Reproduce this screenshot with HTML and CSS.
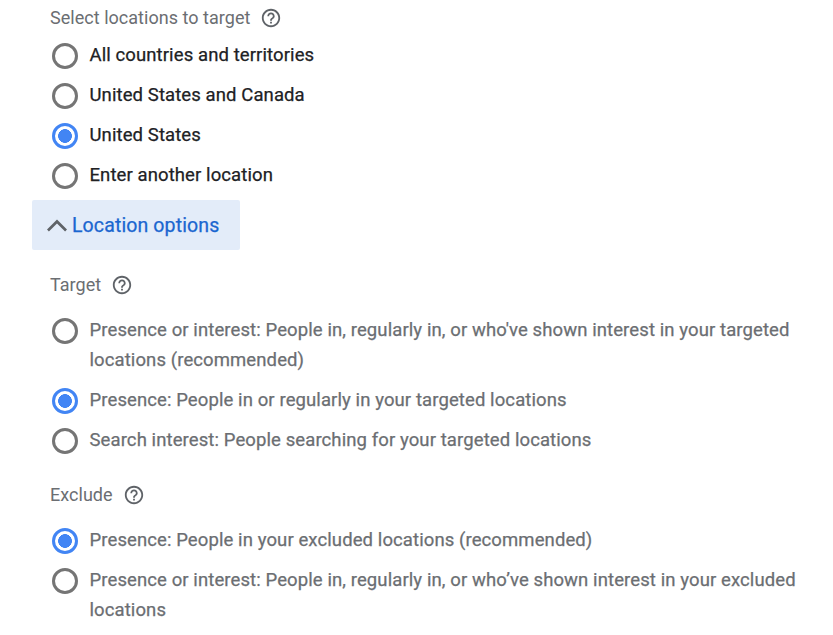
FILE: index.html
```html
<!DOCTYPE html>
<html lang="en">
<head>
<meta charset="utf-8">
<title>Location options</title>
<link rel="stylesheet" href="styles.css">
</head>
<body>
<main class="page">
  <div class="heading first">Select locations to target
    <svg class="help" viewBox="0 0 24 24"><path d="M11 18h2v-2h-2v2zm1-16C6.48 2 2 6.48 2 12s4.48 10 10 10 10-4.48 10-10S17.52 2 12 2zm0 18c-4.41 0-8-3.59-8-8s3.59-8 8-8 8 3.59 8 8-3.59 8-8 8zm0-14c-2.21 0-4 1.79-4 4h2c0-1.1.9-2 2-2s2 .9 2 2c0 2-3 1.75-3 5h2c0-2.25 3-2.5 3-5 0-2.21-1.79-4-4-4z"/></svg>
  </div>
  <div class="group strong">
    <div class="opt"><span class="radio"></span><span>All countries and territories</span></div>
    <div class="opt"><span class="radio"></span><span>United States and Canada</span></div>
    <div class="opt"><span class="radio on"></span><span>United States</span></div>
    <div class="opt"><span class="radio"></span><span>Enter another location</span></div>
  </div>
  <div class="toggle">
    <svg class="chev" viewBox="0 0 24 24"><path d="M12 6.6l-10 10 1.9 1.9 8.1-8.1 8.1 8.1 1.9-1.9z"/></svg>
    <span class="toggle-label">Location options</span>
  </div>
  <div class="heading target">Target
    <svg class="help" viewBox="0 0 24 24"><path d="M11 18h2v-2h-2v2zm1-16C6.48 2 2 6.48 2 12s4.48 10 10 10 10-4.48 10-10S17.52 2 12 2zm0 18c-4.41 0-8-3.59-8-8s3.59-8 8-8 8 3.59 8 8-3.59 8-8 8zm0-14c-2.21 0-4 1.79-4 4h2c0-1.1.9-2 2-2s2 .9 2 2c0 2-3 1.75-3 5h2c0-2.25 3-2.5 3-5 0-2.21-1.79-4-4-4z"/></svg>
  </div>
  <div class="group muted">
    <div class="opt"><span class="radio"></span><span>Presence or interest: People in, regularly in, or who've shown interest in your targeted locations (recommended)</span></div>
    <div class="opt"><span class="radio on"></span><span>Presence: People in or regularly in your targeted locations</span></div>
    <div class="opt"><span class="radio"></span><span>Search interest: People searching for your targeted locations</span></div>
  </div>
  <div class="heading exclude">Exclude
    <svg class="help" viewBox="0 0 24 24"><path d="M11 18h2v-2h-2v2zm1-16C6.48 2 2 6.48 2 12s4.48 10 10 10 10-4.48 10-10S17.52 2 12 2zm0 18c-4.41 0-8-3.59-8-8s3.59-8 8-8 8 3.59 8 8-3.59 8-8 8zm0-14c-2.21 0-4 1.79-4 4h2c0-1.1.9-2 2-2s2 .9 2 2c0 2-3 1.75-3 5h2c0-2.25 3-2.5 3-5 0-2.21-1.79-4-4-4z"/></svg>
  </div>
  <div class="group muted">
    <div class="opt"><span class="radio on"></span><span>Presence: People in your excluded locations (recommended)</span></div>
    <div class="opt"><span class="radio"></span><span>Presence or interest: People in, regularly in, or who’ve shown interest in your excluded locations</span></div>
  </div>
</main>
</body>
</html>
```
FILE: styles.css
```css
html, body {
  margin: 0;
  padding: 0;
  background: #fff;
  overflow: hidden;
}
.page {
  height: 635px;
  overflow: hidden;
  font-family: Roboto, "Liberation Sans", sans-serif;
  font-size: 18px;
  line-height: 30px;
  box-sizing: border-box;
  padding: 3px 32px 0 32px;
}
.heading {
  display: flex;
  align-items: center;
  gap: 10px;
  margin-left: 18px;
  color: #6b6e72;
  height: 30px;
  letter-spacing: 0.03px;
}
.help {
  width: 22px;
  height: 22px;
  fill: #5f6368;
}
.group {
  display: flex;
  flex-direction: column;
  gap: 10px;
}
.first + .group {
  margin-top: 7px;
}
.opt {
  display: flex;
  align-items: flex-start;
  gap: 11.5px;
  margin-left: 20px;
  font-size: 18.5px;
  letter-spacing: 0.1px;
  -webkit-text-stroke: 0.25px;
}
.strong {
  color: #202124;
}
.muted {
  color: #6b6e72;
}
.radio {
  flex: none;
  width: 26px;
  height: 26px;
  box-sizing: border-box;
  border: 3px solid #757575;
  border-radius: 50%;
  margin-top: 3px;
}
.radio.on {
  border-color: #4285f4;
  background: radial-gradient(circle, #4285f4 0 6.6px, #fff 7.1px);
}
.toggle {
  display: flex;
  align-items: center;
  width: 208px;
  height: 50px;
  box-sizing: border-box;
  padding-left: 13px;
  margin-top: 10px;
  background: #e3ecf9;
  border-radius: 2px;
  color: #1a66d0;
  font-size: 19.5px;
  letter-spacing: 0.12px;
  -webkit-text-stroke: 0.25px;
}
.toggle-label {
  padding-top: 2px;
}
.chev {
  width: 24px;
  height: 24px;
  fill: #5f6368;
  margin-right: 3px;
}
.target {
  margin-top: 20px;
}
.target + .group {
  margin-top: 15px;
}
.exclude {
  margin-top: 25px;
}
.exclude + .group {
  margin-top: 15px;
}
```
